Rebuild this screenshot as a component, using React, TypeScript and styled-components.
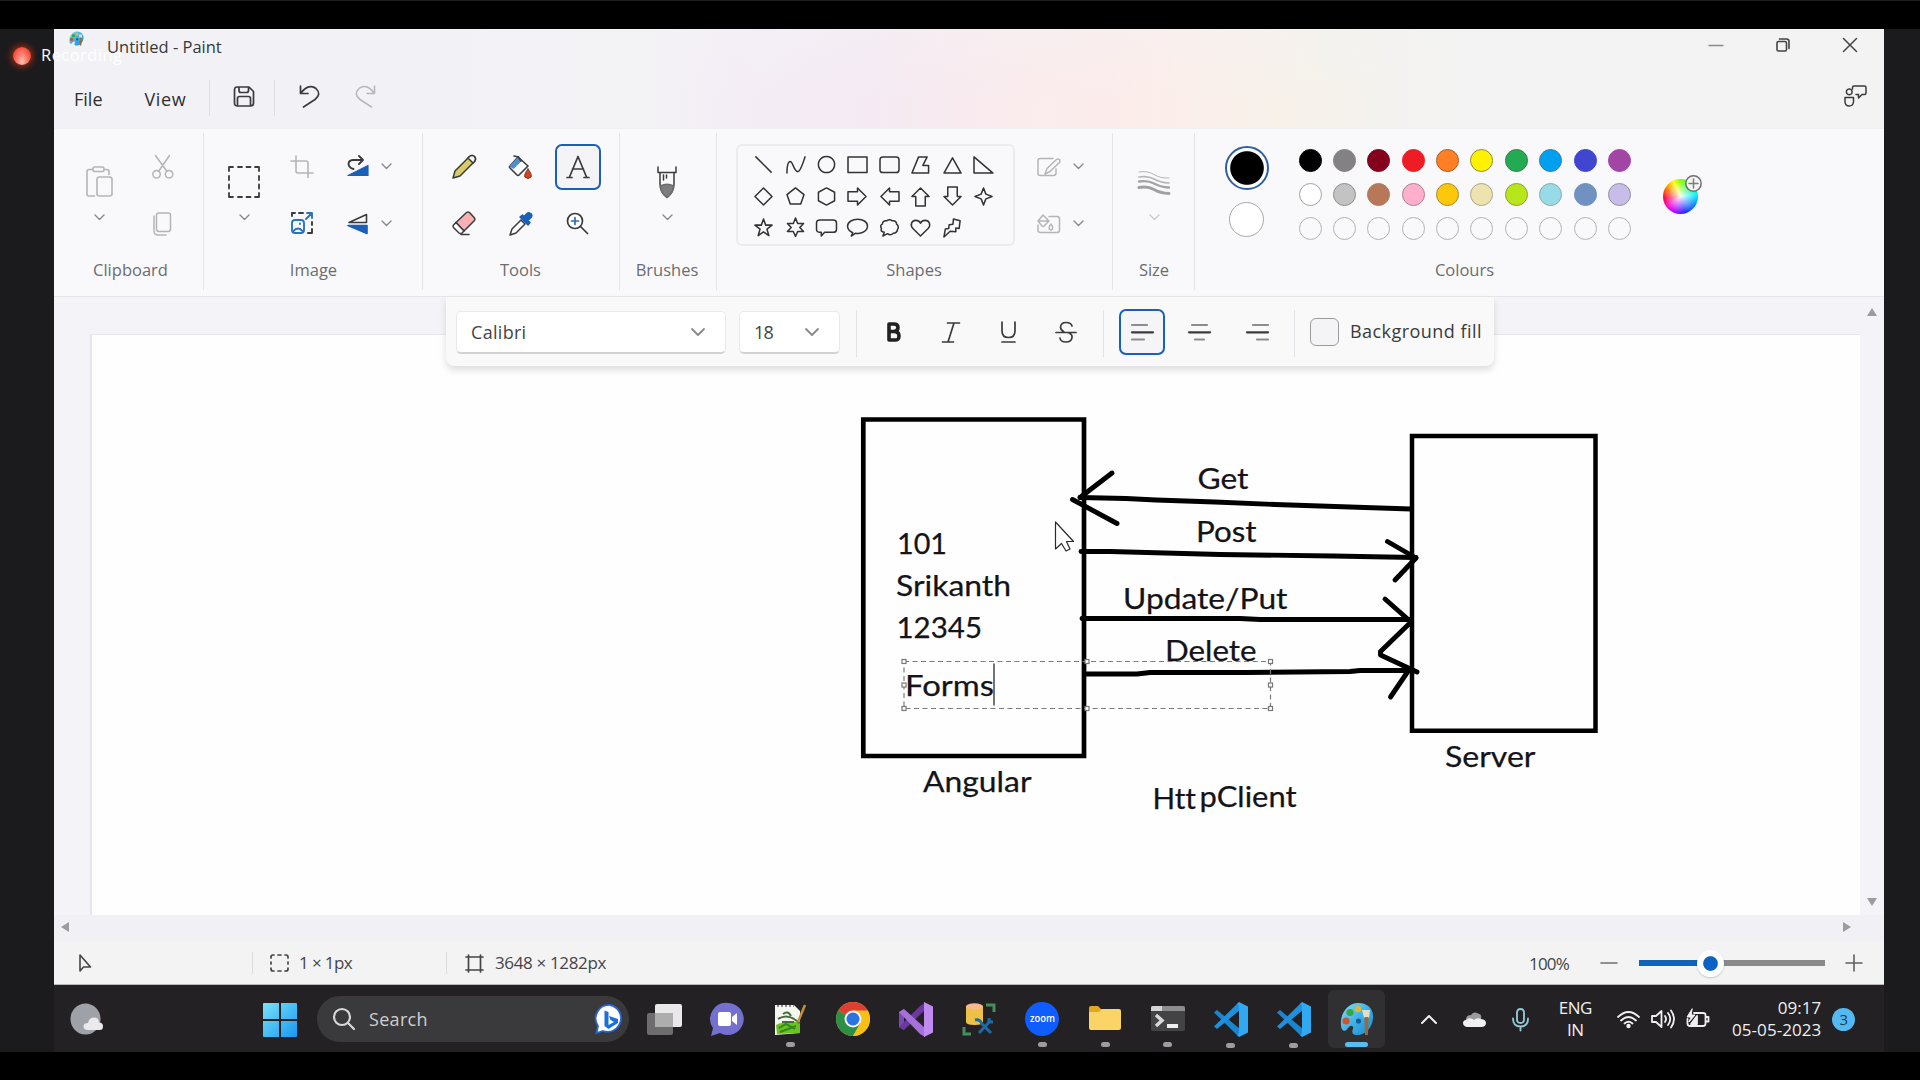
import React from "react";
import styled, { createGlobalStyle } from "styled-components";

const ink = "#3b3b3d";
const blue = "#1a5fb8";
const muted = "#b5b5b8";
const uiFont = '"Open Sans", "Noto Sans", sans-serif';

const GlobalStyle = createGlobalStyle`
  * { box-sizing: border-box; }
  body { margin: 0; background: #000; font-family: ${uiFont}; }
  svg { display: block; flex: none; overflow: visible; }
`;

/* ---------- shell ---------- */

const Screen = styled.div`
  position: relative;
  width: 1920px;
  height: 1080px;
  overflow: hidden;
  background: #000;
  border-top: 1px solid #1d1d1d;
  padding: 28px 0;
`;
const Stage = styled.main`
  height: 1023px;
  padding: 0 36px 0 54px;
  background: #1b1b1d;
`;
const Win = styled.section`
  display: flex;
  flex-direction: column;
  height: 956px;
  background: #f3f3f5;
`;
const Chrome = styled.header`
  height: 99px;
  background:
    linear-gradient(180deg, rgba(243, 243, 245, 0.3), rgba(243, 243, 245, 0) 70%),
    linear-gradient(90deg, #f2f1f5 0, #f3f2f5 600px, #f3edf6 680px, #f5eaf3 820px, #faebed 960px, #fbeceb 1060px, #fbefea 1140px, #f6f2eb 1260px, #f3f3f3 1400px, #f3f3f3 100%);
`;
const TitleBar = styled.div`
  display: flex;
  height: 40px;
  padding-right: 1px;
`;
const AppMark = styled.div`
  width: 53px;
  padding: 2px 0 0 15px;
`;
const Title = styled.h1`
  flex: 1;
  margin: 0;
  font-size: 16.5px;
  font-weight: 400;
  line-height: 35px;
  color: #38383a;
`;
const Caption = styled.div`
  display: flex;
  width: 67px;
  height: 32px;
  align-items: center;
  justify-content: center;
  color: #444;
`;
const MenuBar = styled.nav`
  display: flex;
  align-items: center;
  height: 59px;
  color: #353537;
`;
const MenuItem = styled.button<{ $left: number; $ls?: number }>`
  margin: 0 0 0 ${(p) => p.$left}px;
  padding: 0;
  border: 0;
  background: none;
  font: 18px/28px ${uiFont};
  letter-spacing: ${(p) => p.$ls ?? 0}px;
  color: #2f2f31;
`;
const MenuRule = styled.span<{ $left: number }>`
  width: 1px;
  height: 36px;
  margin: 0 0 2px ${(p) => p.$left}px;
  background: #dfdfe3;
`;
const MenuIcon = styled.span<{ $left: number; $faint?: boolean }>`
  margin: 0 0 5px ${(p) => p.$left}px;
  color: ${(p) => (p.$faint ? "#b9b9bc" : ink)};
`;

/* ---------- ribbon ---------- */

const Ribbon = styled.div`
  display: flex;
  height: 169px;
  background: #f9f9fb;
  border-top: 1px solid #f0f0f3;
  border-bottom: 1px solid #e6e6ea;
`;
const GroupBox = styled.section<{ $w: number; $rule?: boolean; $inset?: string }>`
  display: flex;
  flex-direction: column;
  width: ${(p) => p.$w}px;
  padding: ${(p) => p.$inset ?? "9px 0 0"};
  background: ${(p) => (p.$rule === false ? "none" : "linear-gradient(#e4e4e8, #e4e4e8) right 4px / 1px 157px no-repeat")};
  background-position: right 4px;
`;
const GroupBody = styled.div<{ $cols?: string; $left?: number }>`
  display: grid;
  grid-template-columns: ${(p) => p.$cols ?? "1fr"};
  grid-template-rows: 57px 57px;
  place-items: center;
  justify-content: start;
  height: 114px;
  padding-left: ${(p) => p.$left ?? 0}px;
`;
const GroupLabel = styled.h2`
  margin: 0;
  font-size: 16.5px;
  font-weight: 400;
  line-height: 35px;
  text-align: center;
  color: #6c6c6f;
`;
const BigTool = styled.div<{ $faint?: boolean }>`
  grid-row: span 2;
  align-self: start;
  display: flex;
  flex-direction: column;
  align-items: center;
  gap: 17px;
  padding-top: 28px;
  color: ${(p) => (p.$faint ? muted : ink)};
`;
const Small = styled.div<{ $faint?: boolean }>`
  display: flex;
  align-items: center;
  justify-content: center;
  color: ${(p) => (p.$faint ? muted : ink)};
`;
const SplitTool = styled.div<{ $faint?: boolean }>`
  display: flex;
  align-items: center;
  gap: 13px;
  color: ${(p) => (p.$faint ? muted : ink)};
`;
const Chosen = styled.div`
  display: flex;
  align-items: center;
  justify-content: center;
  width: 46px;
  height: 46px;
  border: 2px solid ${blue};
  border-radius: 7px;
  background: #f4f4f6;
  color: ${ink};
`;
const ShapesRow = styled.div`
  display: flex;
  height: 114px;
  padding-left: 19px;
`;
const ShapeGrid = styled.div`
  display: grid;
  grid-template-columns: repeat(8, 31.4px);
  grid-template-rows: repeat(3, 31.4px);
  place-items: center;
  width: 279px;
  height: 102px;
  margin-top: 6px;
  padding: 3px 0 0 10px;
  align-content: start;
  border: 2px solid #ececf0;
  border-radius: 6px;
  color: #333335;
`;
const ShapeOptions = styled.div`
  display: grid;
  grid-template-rows: 57px 57px;
  align-items: center;
  margin-left: 22px;
`;
const ColourBody = styled.div`
  display: flex;
  height: 114px;
`;
const Picked = styled.div`
  display: flex;
  flex-direction: column;
  align-items: center;
  width: 45px;
  margin: 8px 0 0 29px;
  gap: 12px;
`;
const Primary = styled.span`
  width: 44px;
  height: 44px;
  border: 2px solid #2f5ea3;
  border-radius: 50%;
  background: radial-gradient(circle, #000 16.3px, #fdfdfe 17.3px);
`;
const Secondary = styled.span`
  width: 35px;
  height: 35px;
  border: 1.5px solid #a9a9ab;
  border-radius: 50%;
  background: #fff;
`;
const Palette = styled.div`
  display: grid;
  grid-template-columns: repeat(10, 34.36px);
  grid-template-rows: repeat(3, 34.3px);
  place-items: center;
  margin: 5px 0 0 24px;
`;
const Swatch = styled.span<{ $c?: string; $ring?: string }>`
  width: 23px;
  height: 23px;
  border-radius: 50%;
  background: ${(p) => p.$c ?? "transparent"};
  border: 1.5px solid ${(p) => p.$ring ?? p.$c ?? "#b3b3b6"};
`;
const Wheel = styled.div`
  position: relative;
  width: 35px;
  height: 35px;
  margin: 41px 0 0 26px;
  border-radius: 50%;
  background:
    radial-gradient(circle, rgba(255, 255, 255, 0.95), rgba(255, 255, 255, 0) 68%),
    conic-gradient(#8f0, #0f6 45deg, #0ef 85deg, #08f 120deg, #22f 165deg, #b0f 205deg, #f0c 235deg, #f04 265deg, #f60 295deg, #ff0 335deg, #8f0);
`;
const WheelAdd = styled.span`
  position: absolute;
  top: -4px;
  left: 22px;
`;

/* ---------- text tool bar ---------- */

const Workspace = styled.div`
  position: relative;
  display: grid;
  grid-template-columns: 1806px 24px;
  grid-template-rows: 618px 26px;
  height: 644px;
  background: #f4f3f7;
`;
const TextBar = styled.div`
  position: absolute;
  top: 0;
  left: 392px;
  display: flex;
  align-items: flex-start;
  width: 1048px;
  height: 69px;
  padding: 14px 0 0 10px;
  border-radius: 0 0 8px 8px;
  background: #f9f9fa;
  box-shadow: 0 4px 7px rgba(0, 0, 0, 0.13);
`;
const Select = styled.div<{ $w: number; $gap?: number; $ls?: number }>`
  display: flex;
  align-items: center;
  justify-content: space-between;
  width: ${(p) => p.$w}px;
  height: 43px;
  margin-right: ${(p) => p.$gap ?? 0}px;
  padding: 0 21px 0 14px;
  border: 1px solid #e9e9ec;
  border-bottom: 2px solid #d2d2d5;
  border-radius: 5px;
  background: #fff;
  font-size: 18px;
  letter-spacing: ${(p) => p.$ls ?? 0}px;
  color: #444446;
`;
const BarRule = styled.span<{ $l: number; $r: number }>`
  width: 1px;
  height: 47px;
  margin: -1px ${(p) => p.$r}px 0 ${(p) => p.$l}px;
  background: #e3e3e7;
`;
const BarButton = styled.div<{ $w: number; $on?: boolean }>`
  display: flex;
  align-items: center;
  justify-content: center;
  width: ${(p) => p.$w}px;
  height: 46px;
  margin-top: -2px;
  border: 2px solid ${(p) => (p.$on ? blue : "transparent")};
  border-radius: 7px;
  background: ${(p) => (p.$on ? "#f5f5f8" : "none")};
  color: ${ink};
`;
const Box = styled.span`
  width: 29px;
  height: 28px;
  margin: 7px 11px 0 0;
  border: 1.5px solid #9b9b9e;
  border-radius: 6px;
  background: #f4f4f6;
`;
const FillLabel = styled.span`
  font-size: 18px;
  line-height: 41px;
  letter-spacing: 0.45px;
  color: #3a3a3c;
`;

/* ---------- canvas ---------- */

const CanvasArea = styled.div`
  padding: 37px 0 0 36px;
`;
const Paper = styled.div`
  height: 581px;
  border-top: 1px solid #e7e6ea;
  border-left: 2px solid #e7e6ea;
  background: #fefefe;
`;
const VScroll = styled.div`
  display: flex;
  flex-direction: column;
  justify-content: space-between;
  align-items: center;
  padding: 10px 0 8px;
`;
const HScroll = styled.div`
  display: flex;
  justify-content: space-between;
  align-items: center;
  padding: 0 9px 2px 7px;
  background: #f1f0f4;
`;
const Corner = styled.div`
  background: #f1f0f4;
`;

/* ---------- status ---------- */

const Status = styled.footer`
  display: flex;
  align-items: center;
  height: 44px;
  padding-top: 1px;
  border-bottom: 1px solid #b7b7b9;
  background: #f3f3f4;
  font-size: 17px;
  color: #454547;
`;
const StatusCell = styled.div<{ $w: number; $left: number; $gap?: number; $ls?: number }>`
  display: flex;
  align-items: center;
  gap: ${(p) => p.$gap ?? 0}px;
  width: ${(p) => p.$w}px;
  height: 22px;
  padding-left: ${(p) => p.$left}px;
  border-right: 1px solid #dcdce0;
  line-height: 22px;
  letter-spacing: ${(p) => p.$ls ?? 0}px;
  white-space: pre;
  &:nth-child(3) { border-right: 0; }
`;
const Zoom = styled.div`
  display: flex;
  flex: 1;
  align-items: center;
  justify-content: flex-end;
  padding-right: 22px;
`;
const Percent = styled.span`
  margin-right: 32px;
  letter-spacing: -0.8px;
`;
const Track = styled.div`
  display: flex;
  align-items: center;
  width: 186px;
  height: 26px;
  margin: 0 21px 0 22px;
  background: linear-gradient(90deg, #1262b8 70px, #8a8a8a 70px) center / 100% 6px no-repeat;
  border-radius: 3px;
`;
const Thumb = styled.span`
  width: 27px;
  height: 27px;
  margin-left: 58px;
  border-radius: 50%;
  background: radial-gradient(circle, #0a63c4 6.8px, #fff 7.8px);
  box-shadow: 0 1px 2px rgba(0, 0, 0, 0.2);
`;

/* ---------- task bar ---------- */

const TaskBar = styled.div`
  display: flex;
  height: 67px;
  background: #232123;
  color: #efeff0;
`;
const Weather = styled.div`
  width: 209px;
  padding: 18px 0 0 16px;
`;
const Start = styled.div`
  width: 54px;
  padding-top: 18px;
`;
const SearchBox = styled.div`
  display: flex;
  align-items: center;
  width: 312px;
  height: 46px;
  margin-top: 11px;
  padding: 0 4px 0 16px;
  border-radius: 23px;
  background: #3a3a3c;
`;
const SearchText = styled.span`
  flex: 1;
  margin-left: 14px;
  font-size: 18px;
  letter-spacing: 0.3px;
  color: #cfcfd1;
`;
const Pins = styled.div`
  display: grid;
  grid-template-columns: repeat(12, 62.95px);
  margin-left: 4px;
`;
const Pin = styled.div<{ $active?: boolean; $run?: boolean }>`
  display: flex;
  flex-direction: column;
  align-items: center;
  justify-self: center;
  width: 57px;
  height: 58px;
  margin-top: 5px;
  padding-top: 12px;
  border-radius: 6px;
  background: ${(p) => (p.$active ? "#303032" : "none")};
  &::after {
    content: "";
    width: ${(p) => (p.$active ? 23 : 9)}px;
    height: 5px;
    margin-top: 6px;
    border-radius: 3px;
    background: ${(p) => (p.$active ? "#58bdf0" : p.$run ? "#9d9d9f" : "transparent")};
  }
`;
const Tray = styled.div`
  display: flex;
  flex: 1;
  align-items: center;
  height: 68px;
  padding-left: 33px;
`;
const TrayIcon = styled.span<{ $left: number }>`
  margin-left: ${(p) => p.$left}px;
`;
const TrayText = styled.div<{ $w: number; $left: number; $align: string; $ls: number }>`
  width: ${(p) => p.$w}px;
  margin-left: ${(p) => p.$left}px;
  font-size: 17px;
  line-height: 22.4px;
  letter-spacing: ${(p) => p.$ls}px;
  text-align: ${(p) => p.$align};
  white-space: nowrap;
`;
const Count = styled.span`
  width: 23px;
  height: 23px;
  margin-left: 11px;
  border-radius: 50%;
  background: #52b9f3;
  color: #173a54;
  font-size: 15px;
  line-height: 22px;
  text-align: center;
`;

/* ---------- recording overlay ---------- */

const Recording = styled.div`
  position: absolute;
  top: 39px;
  left: 13px;
  display: flex;
  align-items: center;
  gap: 10px;
  height: 32px;
  font-size: 16.5px;
  line-height: 30px;
  letter-spacing: 0.45px;
  color: #fff;
`;
const RecordingText = styled.span`
  margin-top: -2px;
`;
const Dot = styled.span`
  width: 18px;
  height: 18px;
  border-radius: 50%;
  background: radial-gradient(ellipse at 50% 80%, #ffc4ba 0, #ff8a7a 30%, #f4483a 75%);
  box-shadow: 0 0 6px 2px rgba(190, 50, 15, 0.75);
`;

/* ---------- drawing helpers ---------- */

type IcProps = { w: number; h: number; sw?: number; vb?: string; children: React.ReactNode };
const Ic = ({ w, h, sw = 1.6, vb, children }: IcProps) => (
  <svg width={w} height={h} viewBox={vb ?? `0 0 ${w} ${h}`} fill="none" stroke="currentColor" strokeWidth={sw} strokeLinecap="round" strokeLinejoin="round">
    {children}
  </svg>
);
const Chevron = ({ w = 9, c = "#88888b" }: { w?: number; c?: string }) => (
  <svg width={w} height={w / 2} viewBox="0 0 10 5" fill="none" stroke={c} strokeWidth={1.5} strokeLinecap="round" strokeLinejoin="round">
    <path d="M0 0l5 5 5-5" />
  </svg>
);
const Group = ({ w, label, rule, inset, children }: { w: number; label: string; rule?: boolean; inset?: string; children: React.ReactNode }) => (
  <GroupBox $w={w} $rule={rule} $inset={inset}>
    {children}
    <GroupLabel>{label}</GroupLabel>
  </GroupBox>
);

const shapes = [
  "M2 2L18 18",
  "M1 19C1 5 5 5 7 10S12 21 15 15S18 8 20 2",
  "M10 1.5a8.5 8.5 0 1 0 .01 0z",
  "M0 2H20V18.500H0z",
  "M3 2H17Q20 2 20 5V15.500Q20 18.500 17 18.500H3Q0 18.500 0 15.500V5Q0 2 3 2z",
  "M8 2H17L12.500 11H18.500V19H1z",
  "M10 3L19 19H1z",
  "M0 2V19H20z",
  "M10 1L19 10L10 19L1 10z",
  "M10 1L19 8L15.500 18H4.500L1 8z",
  "M10 1L18.500 5.500V14.500L10 19L1.500 14.500V5.500z",
  "M0 5H10V1L19 10L10 19V15H0z",
  "M20 5H10V1L1 10L10 19V15H20z",
  "M5 20V10H1L10 1L19 10H15V20z",
  "M5 0V10H1L10 19L19 10H15V0z",
  "M10 1L12.500 7.500L19 10L12.500 12.500L10 19L7.500 12.500L1 10L7.500 7.500z",
  "M10 1L12.300 7.500H19L13.600 11.600L15.600 18.500L10 14.500L4.400 18.500L6.400 11.600L1 7.500H7.700z",
  "M10 0L12.300 5.800H18.500L14.500 10L18.500 14.200H12.300L10 19.500L7.700 14.200H1.500L5.500 10L1.500 5.800H7.700z",
  "M3 2H17Q20.500 2 20.500 5V12Q20.500 15 17 15H8L4.500 19V15H3Q-.5 15 -.5 12V5Q-.5 2 3 2z",
  "M5 15.500Q-.5 13 -.5 8.500C0 -1 20.500 -1 20.500 8.500C20.500 14 14 17 8 16L3.500 19z",
  "M4.500 15Q0 14.500 1.500 11Q-.5 8 2.500 6.500Q3 2.500 7 3Q10 .5 13 3Q17 2.500 17.500 6.500Q20.500 9 18.500 12Q18 16 14 16Q11 19 8 16.500L3 19z",
  "M10 19L2 11C-1.500 7 1 2.500 5 2.500Q8.500 2.500 10 5.500Q11.500 2.500 15 2.500C19 2.500 21.500 7 18 11z",
  "M11 1L18 3L17 11L13.500 10.500L13.500 14.500L7.500 14L1 20L2.500 11.500L6 11L6.500 7L10.500 6.500z",
];

const row1 = [["#000"], ["#838184"], ["#85001c"], ["#ee1c24"], ["#ff8024", "#a75e2b"], ["#fff200", "#8d8a3c"], ["#22ab52", "#3e7851"], ["#009ff0", "#3a7da5"], ["#4045d2"], ["#a246a6"]];
const row2 = [["#fff", "#a2a2a4"], ["#c3c3c4", "#8e8e90"], ["#b87857"], ["#ffaecb", "#a98390"], ["#ffc70b", "#a28a3c"], ["#eee3ae", "#a9a58f"], ["#b7e61b", "#89a13a"], ["#98dae6", "#8aa9af"], ["#7191c0"], ["#c8bde8", "#95909f"]];

const PaintMark = ({ s }: { s: number }) => (
  <svg width={s} height={s} viewBox="0 0 34 34">
    <defs>
      <linearGradient id="pal" x1="0" y1="0" x2="1" y2="1">
        <stop offset="0" stopColor="#8adcf0" />
        <stop offset=".5" stopColor="#3fb2e6" />
        <stop offset="1" stopColor="#1c86d2" />
      </linearGradient>
    </defs>
    <path d="M17 1C27 0 34 7 33 16C32.500 24 27 32 19 33C13 33.500 11 31 13 27C14 24 11 22 8 26C5 31 1 29 1 23C0 12 7 2 17 1z" fill="url(#pal)" />
    <circle cx="6" cy="19" r="3.600" fill="#d1532c" />
    <circle cx="10" cy="10.500" r="3.600" fill="#35a83f" />
    <circle cx="18" cy="7" r="3.300" fill="#d8b93a" />
    <circle cx="18.500" cy="19" r="2.600" fill="#0e5d9a" />
    <path d="M22 8h8l-1 8h-5z" fill="#e6dcc8" />
    <path d="M24.500 15h4l-.5 18h-3z" fill="#a0672f" />
  </svg>
);

const VsCode = () => (
  <svg width="36" height="35" viewBox="0 0 36 35">
    <path d="M1 10.500L4 8L27 27V34.500L25 34z" fill="#1a86d0" />
    <path d="M1 24.500L4 27L27 8V.5L25 1z" fill="#2190dc" />
    <path d="M26 0L35 4.500V30.500L26 35L24 33Q26 33 26 30V5Q26 2 24 2z" fill="#30a9f2" />
  </svg>
);

/* text drawn on the canvas: x, baseline, width, value */
const notes: [number, number, number, string][] = [
  [897, 554, 50, "101"],
  [896, 596, 115, "Srikanth"],
  [896.500, 638, 85.500, "12345"],
  [905, 695.500, 89, "Forms"],
  [1197.500, 489, 51, "Get"],
  [1196, 542, 60.500, "Post"],
  [1123, 609, 164.500, "Update/Put"],
  [1165, 661, 91.500, "Delete"],
  [923, 792, 108.500, "Angular"],
  [1152.500, 809, 43.500, "Htt"],
  [1199.500, 807, 97, "pClient"],
  [1445, 766.500, 90.500, "Server"],
];
const strokes = [
  "M1080 497.500L1126 498.500L1156 500L1215 502L1275 504.500L1335 506.500L1365 507.500L1411 509",
  "M1112 473L1080 497.500", "M1072.500 499.500L1117 523.500",
  "M1081 551.500L1110 551.500L1165 553L1220 554.500L1333 556L1387 557L1416 557.500",
  "M1387.500 541.500L1416 558L1395 580",
  "M1082 618.500H1240L1260 619.500H1410",
  "M1385 599L1411 622L1380.500 651.500V655L1417 672",
  "M1085 674L1137 674L1150 672.500H1245L1350 671.500L1360 670.500H1411",
  "M1390.500 697L1408.500 670.500",
];
const handles: [number, number][] = [[904, 661.500], [1087, 661.500], [1270.500, 661.500], [904, 685], [1270.500, 685], [904, 708.500], [1087, 708.500], [1270.500, 708.500]];

const NoteText = styled.text`
  font: 28.8px Lato, Carlito, sans-serif;
  font-variant-ligatures: none;
  fill: #141418;
  stroke: #141418;
  stroke-width: 0.25px;
`;

const Drawing = () => (
  <svg width="1767" height="580" viewBox="92 335 1767 580">
    <g fill="none" stroke="#000" strokeWidth="4.900" strokeLinecap="round" strokeLinejoin="round">
      <path d="M863.300 419.500H1084V756H863.300z" strokeWidth="4.700" strokeLinejoin="miter" />
      <path d="M1412 436H1595.500V730.800H1412z" strokeWidth="4.500" strokeLinejoin="miter" />
      {strokes.map((d) => <path key={d} d={d} />)}
    </g>
    {notes.map(([x, y, w, t]) => (
      <NoteText key={t} x={x} y={y} textLength={w} lengthAdjust="spacingAndGlyphs">{t}</NoteText>
    ))}
    <path d="M904 661.500H1270.500V708.500H904z" fill="none" stroke="#7b7b7e" strokeWidth="1.200" strokeDasharray="5 3.500" />
    {handles.map(([x, y]) => <rect key={`${x}-${y}`} x={x - 2} y={y - 2} width="4" height="4" fill="#fff" stroke="#77777a" strokeWidth="1.200" />)}
    <path d="M994 663.500V705.500" stroke="#2a2a2c" strokeWidth="1.300" />
    <path d="M1055.500 522V549L1061.500 543.500L1066 551L1070 549L1066.500 541.500H1073.500z" fill="#fff" stroke="#2a2a2e" strokeWidth="1.200" strokeLinejoin="round" />
  </svg>
);

export default function App() {
  return (
    <Screen>
      <GlobalStyle />
      <Stage>
        <Win>
          <Chrome>
            <TitleBar>
              <AppMark><PaintMark s={15} /></AppMark>
              <Title>Untitled - Paint</Title>
              <Caption><Ic w={14} h={14} sw={1.3}><path d="M0 7.500H14" stroke="#8b8b8d" /></Ic></Caption>
              <Caption><Ic w={14} h={14} sw={1.600}><path d="M1 5Q1 3.500 2.500 3.500H9Q10.500 3.500 10.500 5V11.500Q10.500 13 9 13H2.500Q1 13 1 11.500zM3.500 1H10.500Q13 1 13 3.500V10.500" /></Ic></Caption>
              <Caption><Ic w={14} h={14} sw={1.500}><path d="M.5 .5L13.500 13.500M13.500 .5L.5 13.500" /></Ic></Caption>
            </TitleBar>
            <MenuBar>
              <MenuItem $left={20}>File</MenuItem>
              <MenuItem $left={42} $ls={0.6}>View</MenuItem>
              <MenuRule $left={23} />
              <MenuIcon $left={23.5}>
                <Ic w={20} h={21} sw={1.7}><path d="M3 1H15L19.500 5.500V17Q19.500 20 16.500 20H3.500Q.5 20 .5 17V4Q.5 1 3 1zM5 1V4.500Q5 6.500 7 6.500H12.500Q14.500 6.500 14.500 4.500V1M3.500 20V12.500Q3.500 10.500 5.500 10.500H14.500Q16.500 10.500 16.500 12.500V20" /></Ic>
              </MenuIcon>
              <MenuRule $left={20.5} />
              <MenuIcon $left={25}>
                <Ic w={20} h={23} sw={1.7}><path d="M.5 1V8.500H8M1 8C6 1 12 0 16 3.500C20 7.500 19.500 11 15 14.500L3.500 22" /></Ic>
              </MenuIcon>
              <MenuIcon $left={35} $faint>
                <Ic w={20} h={23} sw={1.600}><path d="M19.500 1V8.500H12M19 8C14 1 8 0 4 3.500C0 7.500 .5 11 5 14.500L16.500 22" /></Ic>
              </MenuIcon>
              <MenuIcon $left={1469}>
                <Ic w={24} h={24} sw={1.500}><path d="M1 13.500H9.500V18Q9 22 5.200 22T1 18zM5.200 5A2.900 2.900 0 1 0 5.300 5M8.500 5V3.500Q8.500 2 10 2H20.500Q22 2 22 3.500V9Q22 10.500 20.500 10.500H18L14.500 14V10.500H12" /></Ic>
              </MenuIcon>
            </MenuBar>
          </Chrome>

          <Ribbon>
            <Group w={150} label="Clipboard" inset="9px 0 0 3px">
              <GroupBody $cols="62px 65px" $left={11}>
                <BigTool $faint>
                  <Ic w={27} h={32}><path d="M6.500 3.500H3Q1 3.500 1 5.500V28Q1 30 3 30H8.500M19.500 3.500H21Q23 3.500 23 5.500V8.500M7 2.500Q7 1 8.500 1H16.500Q18 1 18 2.500V4Q18 5.500 16.500 5.500H8.500Q7 5.500 7 4zM13.500 11H23.500Q26 11 26 13.500V28Q26 30 23.500 30H13.500Q11 30 11 28V13.500Q11 11 13.500 11z" /></Ic>
                  <Chevron c="#8a8a8d" />
                </BigTool>
                <Small $faint>
                  <Ic w={22} h={24} sw={1.500}><path d="M3.500 .5L15 16.500M17.500 .5L6.500 16.500M4.500 15.500A3.800 3.800 0 1 0 4.600 15.500M17 15.500A3.800 3.800 0 1 0 17.100 15.500" /></Ic>
                </Small>
                <Small $faint>
                  <Ic w={20} h={24} sw={1.500}><path d="M6 1H15Q17.500 1 17.500 3V17Q17.500 19.500 15 19.500H6Q3.500 19.500 3.500 17V3Q3.500 1 6 1zM1 4V19Q1 23 5 23H13" /></Ic>
                </Small>
              </GroupBody>
            </Group>

            <Group w={219} label="Image">
              <GroupBody $cols="64px 51px 83px" $left={8}>
                <BigTool>
                  <Ic w={32} h={32} sw={1.8}><path d="M1 5V1H5M10 1H14M18.500 1H22.500M27 1H31V5M31 10V14M31 18.500V22.500M31 27V31H27M22.500 31H18.500M14 31H10M5 31H1V27M1 22.500V18.500M1 14V10" /></Ic>
                  <Chevron />
                </BigTool>
                <Small $faint><Ic w={22} h={22} sw={1.600}><path d="M5 0V15Q5 17 7 17H22M0 5H15Q17 5 17 7V21.500" /></Ic></Small>
                <SplitTool>
                  <Ic w={22} h={24} sw={1.900}><path d="M6.500 14C0 12 0 5.500 6 5H15M12 1L16 5L12 9" /><path d="M1 20.500L21 10.500V20.500z" fill={blue} stroke={blue} strokeWidth="1.200" /></Ic>
                  <Chevron />
                </SplitTool>
                <Small>
                  <Ic w={22} h={23} sw={1.900}><path d="M1 4V1H4M8 1H12M21 10V13M21 17V21H17" /><path d="M4 8H10Q13 8 13 11V18Q13 21 10 21H4Q1 21 1 18V11Q1 8 4 8zM2 19.500Q7 13.500 12 19.500M15 7L21 1M16 1H21V6M9 11.500V12" stroke="#2a74bf" /></Ic>
                </Small>
                <SplitTool>
                  <Ic w={22} h={22} sw={1.600}><path d="M2 9.500L19.500 1.500V9.500z" /><path d="M1 12.500H20V20.500z" fill={blue} stroke={blue} /></Ic>
                  <Chevron />
                </SplitTool>
              </GroupBody>
            </Group>

            <Group w={197} label="Tools" inset="9px 2px 0 0">
              <GroupBody $cols="57.2px 57.2px 57.2px" $left={12}>
                <Small>
                  <Ic w={24} h={24} sw={1.500}><path d="M1 23L3 16L17.500 1.500Q20 -.5 22.500 1.500Q24.500 4 22.500 6.500L8 21z" fill="#d9cc62" /><path d="M16 3L21 8L22.500 6.500Q24.500 4 22.500 1.500Q20 -.5 17.500 1.500z" fill="#f6f6f6" /></Ic>
                </Small>
                <Small>
                  <Ic w={24} h={24} sw={1.600}><path d="M9 2L19 11L10 20Q9 21 8 20L1 13Q0 12 1 11z" fill="#fff" /><path d="M1.500 11L9 3L12 5.500L4.500 13z" fill="#4f8fd0" stroke="#4f8fd0" /><path d="M5 1L9.500 2L12 6" /><path d="M19 14Q14.500 20 16 22Q19 25 22 22Q23.500 20 19 14z" fill="#d8431c" stroke="#7b3425" strokeWidth="1" /></Ic>
                </Small>
                <Chosen><Ic w={24} h={24} sw={1.700}><path d="M3.500 22L12 1.500L20.500 22M6.500 14H17.500M1 22.500H6M18 22.500H23" /></Ic></Chosen>
                <Small>
                  <Ic w={24} h={25} sw={1.500}><path d="M14.500 1.500Q16 .5 17.500 1.500L22.500 7Q23.500 8 22.500 9.500L12 20L4 11.500z" fill="#f9b0b3" /><path d="M4 11.500L12 20L10 22Q8.500 23 7 22L1.500 16.500Q.5 15 1.500 14zM9 23.500H17" fill="#fff" /></Ic>
                </Small>
                <Small>
                  <Ic w={24} h={24} sw={1.500}><path d="M1 23L3 17L12 8L16 12L7 21z" fill="#fff" /><path d="M11 5L19 13L21 10.500L19 8.500L22 5.500Q24 3 21.500 1.500Q19.500 0 17.500 2L15 4.500L13.500 3z" fill={blue} stroke={blue} /></Ic>
                </Small>
                <Small>
                  <Ic w={21} h={21} sw={1.700}><circle cx="8" cy="8" r="7.500" fill="#fff" /><path d="M13.500 13.500L20.500 20.500" /><path d="M4.500 8H11.500M8 4.500V11.500" stroke="#2470bd" /></Ic>
                </Small>
              </GroupBody>
            </Group>

            <Group w={97} label="Brushes" inset="9px 3px 0 0">
              <GroupBody>
                <BigTool>
                  <Ic w={20} h={32} sw={1.500}><path d="M1 1V6.500H19V1M3 7V18Q3 26 10 31.500Q17 26 17 18V7M6.500 9V14M9.500 9V12" /><path d="M3.500 20Q10 16.500 16.500 20Q16 27 10 31.500Q4 27 3.500 20z" fill="#7d7d80" stroke="#6c6c6e" /></Ic>
                  <Chevron />
                </BigTool>
              </GroupBody>
            </Group>

            <Group w={396} label="Shapes" inset="9px 2px 0 0">
              <ShapesRow>
                <ShapeGrid>
                  {shapes.map((d) => <Ic key={d} w={19} h={19} sw={1.6} vb="0 0 20 20"><path d={d} /></Ic>)}
                </ShapeGrid>
                <ShapeOptions>
                  <SplitTool $faint>
                    <Ic w={24} h={20} sw={1.500}><path d="M19 12V16Q19 18.500 16.500 18.500H3.500Q1 18.500 1 16.500V4Q1 1.500 3.500 1.500H16M8 17L10 11.500L19.500 2.500Q21 1.500 22.500 2.500Q23.500 4 22.500 5.500L13 14.500z" /></Ic>
                    <Chevron />
                  </SplitTool>
                  <SplitTool $faint>
                    <Ic w={24} h={20} sw={1.500}><path d="M12 2.500H20Q22.500 2.500 22.500 5V16Q22.500 18.500 20 18.500H4Q1 18.500 1 16.500V11M1 7L6 1L12 7L7 12Q6 13 5 12zM1.500 7H12M14 10Q10 15 14 16Q17.500 15 14 10z" /></Ic>
                    <Chevron />
                  </SplitTool>
                </ShapeOptions>
              </ShapesRow>
            </Group>

            <Group w={82} label="Size">
              <GroupBody>
                <BigTool $faint>
                  <Ic w={32} h={32} sw={1}><path d="M1 6Q10 4.500 16 8.500T31 12" /><path d="M1 11Q10 9.500 16 13T31 17" strokeWidth="1.700" /><path d="M1 15.500Q10 14 16 17.500T31 21.500" strokeWidth="2.300" stroke="#a3a3a6" /><path d="M1 21.500Q10 20 16 23.500T31 27.500" strokeWidth="3" stroke="#a0a0a3" /></Ic>
                  <Chevron c="#c9c9cc" />
                </BigTool>
              </GroupBody>
            </Group>

            <Group w={539} label="Colours" rule={false}>
              <ColourBody>
                <Picked><Primary /><Secondary /></Picked>
                <Palette>
                  {row1.concat(row2).map(([c, ring]) => <Swatch key={c} $c={c} $ring={ring} />)}
                  {row1.map(([c]) => <Swatch key={`free${c}`} />)}
                </Palette>
                <Wheel>
                  <WheelAdd><Ic w={17} h={17} sw={1.500}><circle cx="8.500" cy="8.500" r="7.700" fill="#f4f4f4" stroke="#6f6f70" /><path d="M8.500 4V13M4 8.500H13" stroke="#7c7c7e" /></Ic></WheelAdd>
                </Wheel>
              </ColourBody>
            </Group>
          </Ribbon>

          <Workspace>
            <CanvasArea><Paper><Drawing /></Paper></CanvasArea>
            <VScroll>
              <svg width="12" height="10"><path d="M6 1L11 9H1z" fill="#9c9c9f" /></svg>
              <svg width="12" height="10"><path d="M6 9L11 1H1z" fill="#9c9c9f" /></svg>
            </VScroll>
            <HScroll>
              <svg width="9" height="12"><path d="M0 6L8 1V11z" fill="#9c9c9f" /></svg>
              <svg width="9" height="12"><path d="M9 6L1 1V11z" fill="#9c9c9f" /></svg>
            </HScroll>
            <Corner />
            <TextBar>
              <Select $w={270} $gap={13} $ls={0.3}>Calibri<Chevron w={12} /></Select>
              <Select $w={101} $ls={-0.8}>18<Chevron w={12} /></Select>
              <BarRule $l={16} $r={8} />
              <BarButton $w={57}><Ic w={15} h={20} sw={4}><path d="M3 2V18M3 2H8Q12 2 12 5.500T8 9.500H3M8 9.500Q13 9.500 13 14T8.500 18H3" stroke="#222224" strokeWidth="3.600" /></Ic></BarButton>
              <BarButton $w={58}><Ic w={20} h={21} sw={1.700}><path d="M6.500 1H18.500M1.500 20H12.500M13 1L7 20" /></Ic></BarButton>
              <BarButton $w={57}><Ic w={17} h={21} sw={1.700}><path d="M2 0V9Q2 15.500 8.500 15.500T15 9V0M2 20H15" /></Ic></BarButton>
              <BarButton $w={57}><Ic w={20} h={21} sw={1.700}><path d="M16 4Q15 .5 10 .5T4.500 5Q4.500 8 8 10M0 10.500H20M13 11Q16.500 12.500 16 15.500Q15.500 20 10 20T4 16" /></Ic></BarButton>
              <BarRule $l={9} $r={15} />
              <BarButton $w={46} $on><Ic w={23} h={18} sw={2.200}><path d="M1 2H16M1 16.500H13" stroke="#8c8c8f" /><path d="M1 9.300H22" /></Ic></BarButton>
              <BarButton $w={69}><Ic w={23} h={18} sw={2.200}><path d="M4 2H19M7 16.500H16" stroke="#8c8c8f" /><path d="M1 9.300H22" /></Ic></BarButton>
              <BarButton $w={46}><Ic w={23} h={18} sw={2.200}><path d="M7 2H22M11 16.500H22" stroke="#8c8c8f" /><path d="M1 9.300H22" /></Ic></BarButton>
              <BarRule $l={14} $r={15} />
              <Box />
              <FillLabel>Background fill</FillLabel>
            </TextBar>
          </Workspace>

          <Status>
            <StatusCell $w={199} $left={25}><Ic w={12} h={19} sw={1.600}><path d="M1 1V17L4.500 13H11.500z" /></Ic></StatusCell>
            <StatusCell $w={194} $left={17} $gap={10} $ls={-0.6}>
              <Ic w={19} h={18} sw={1.700}><path d="M1 4V3Q1 1 3 1H4M8 1H11M15 1H16Q18 1 18 3V4M18 8V10M18 14V15Q18 17 16 17H15M11 17H8M4 17H3Q1 17 1 15V14M1 10V8" /></Ic>1 × 1px
            </StatusCell>
            <StatusCell $w={260} $left={19} $gap={12} $ls={-0.35}>
              <Ic w={17} h={17} sw={1.700}><path d="M2.500 0V17M14.500 0V17M0 2H17M0 15H17" /></Ic>3648 × 1282px
            </StatusCell>
            <Zoom>
              <Percent>100%</Percent>
              <Ic w={16} h={16} sw={1.600}><path d="M0 8H16" stroke="#707072" /></Ic>
              <Track><Thumb /></Track>
              <Ic w={16} h={16} sw={1.600}><path d="M0 8H16M8 0V16" stroke="#606062" /></Ic>
            </Zoom>
          </Status>
        </Win>

        <TaskBar>
          <Weather>
            <svg width="34" height="33" viewBox="0 0 34 33">
              <ellipse cx="15.500" cy="16" rx="15" ry="15.500" fill="#9ea1a8" />
              <path d="M18 27Q13.500 27 13.500 23.500T18 20Q19 14.500 24 14.500T29 19.500Q33 19.500 33 23.500T29 27z" fill="#e9e9ee" />
            </svg>
          </Weather>
          <Start>
            <svg width="34" height="34" viewBox="0 0 34 34">
              <defs><linearGradient id="win" x1="0" y1="0" x2="1" y2="1"><stop offset="0" stopColor="#79e3fb" /><stop offset="1" stopColor="#1797f0" /></linearGradient></defs>
              <path d="M0 1Q0 0 1 0H16V16H0zM18 0H33Q34 0 34 1V16H18zM0 18H16V34H1Q0 34 0 33zM18 18H34V33Q34 34 33 34H18z" fill="url(#win)" />
            </svg>
          </Start>
          <SearchBox>
            <Ic w={22} h={22} sw={2.200}><circle cx="9" cy="9" r="8" stroke="#d8d8da" /><path d="M15 15L21 21" stroke="#d8d8da" /></Ic>
            <SearchText>Search</SearchText>
            <svg width="32" height="30" viewBox="0 0 32 30">
              <path d="M17 1A13.500 13.500 0 1 1 10 27L3.500 29L5 22A13.500 13.500 0 0 1 17 1z" fill="#fff" stroke="#2864d8" strokeWidth="1.800" />
              <path d="M11.500 6.500L15.500 8V21L21 18L17.500 16L16 12L25 15V19L15.500 25L11.500 22z" fill="#1a6fd8" />
            </svg>
          </SearchBox>
          <Pins>
            <Pin><svg width="36" height="34" viewBox="0 0 36 34"><rect x="9" y="2" width="27" height="23" rx="2" fill="#e9e9ea" /><rect x="1" y="11" width="26" height="22" rx="2" fill="#6d6d6f" /><rect x="9" y="11" width="18" height="14" fill="#adadae" /></svg></Pin>
            <Pin><svg width="34" height="34" viewBox="0 0 34 34"><path d="M18 1A16 16 0 1 1 10 31L1 34L3 26A16 16 0 0 1 18 1z" fill="#7470cf" /><rect x="8" y="10" width="13" height="14" rx="2" fill="#fff" /><path d="M22 15L27 11V23L22 19z" fill="#fff" /></svg></Pin>
            <Pin $run>
              <svg width="32" height="34" viewBox="0 0 32 34">
                <path d="M1 3H20L26 9V31L1 33z" fill="#f4f6f0" />
                <path d="M2 23Q10 19 26 20V31L3 32z" fill="#6cc024" />
                <path d="M5 26L12 22L21 27M6 30L22 24" stroke="#2e8a1c" strokeWidth="2" fill="none" />
                <path d="M4 17Q12 12 20 17T24 20M9 12Q14 8 17 14M8 20H20" stroke="#486b3a" strokeWidth="2" fill="none" />
                <path d="M3 4H20" stroke="#8c8c8c" strokeWidth="2" strokeDasharray="2 2" />
                <path d="M31 3L24 20" stroke="#c3913c" strokeWidth="2.500" />
              </svg>
            </Pin>
            <Pin>
              <svg width="34" height="34" viewBox="0 0 34 34">
                <circle cx="17" cy="17" r="17" fill="#f8c015" />
                <path d="M17 17L2.300 8.500A17 17 0 0 1 31.700 8.500z" fill="#dd4032" />
                <path d="M2.300 8.500A17 17 0 0 0 17 34L24.400 21.200L17 17z" fill="#2d8f46" />
                <path d="M17 8.500H31.700A17 17 0 0 1 17 34L24.400 21.200z" fill="#f8c015" />
                <circle cx="17" cy="17" r="8.500" fill="#f4f4f4" /><circle cx="17" cy="17" r="6.500" fill="#2a73e0" />
              </svg>
            </Pin>
            <Pin>
              <svg width="36" height="35" viewBox="0 0 36 35">
                <path d="M1 10L6 7V28L1 25z" fill="#7d48b8" />
                <path d="M1 25L6 28L27 8V1L22 4z" fill="#6a38a0" />
                <path d="M1 10L6 7L27 26V35L22 32z" fill="#a56fdc" />
                <path d="M26 0L35 4.500V30.500L26 35z" fill="#c08bf0" />
              </svg>
            </Pin>
            <Pin>
              <svg width="34" height="34" viewBox="0 0 34 34">
                <path d="M4 4V20Q4 23 12.500 23T21 20V4z" fill="#efc047" /><ellipse cx="12.500" cy="4.500" rx="8.500" ry="3.300" fill="#f7b98a" />
                <path d="M24 3H32V10M2 25V32H9" stroke="#458f5a" strokeWidth="3" fill="none" />
                <path d="M13 18Q18 17 20 22L29 31M29 18L17 31M27 16V20H31" stroke="#1e6aa6" strokeWidth="3" fill="none" />
              </svg>
            </Pin>
            <Pin $run>
              <svg width="34" height="34" viewBox="0 0 34 34"><circle cx="17" cy="17" r="17" fill="#0f5cff" /><text x="5" y="20" fontSize="10" fontWeight="600" fill="#fff" textLength="25" lengthAdjust="spacingAndGlyphs">zoom</text></svg>
            </Pin>
            <Pin $run>
              <svg width="32" height="34" viewBox="0 0 32 34"><path d="M0 6Q0 4 2 4H9L12 7H22V14H0z" fill="#e3a91c" /><path d="M0 10H10L13 7H30Q32 7 32 9V26Q32 28 30 28H2Q0 28 0 26z" fill="#fbd467" /></svg>
            </Pin>
            <Pin $run>
              <svg width="34" height="34" viewBox="0 0 34 34"><rect y="4" width="34" height="25" rx="2" fill="#434345" /><path d="M0 9V6Q0 4 2 4H32Q34 4 34 6V9z" fill="#8d8d8f" /><path d="M0 9V6Q0 4 2 4H11V9z" fill="#d4d4d5" /><path d="M5 13L11 18.500L5 24" stroke="#d8d8d9" strokeWidth="3.500" fill="none" /><rect x="16" y="22" width="11" height="4" fill="#eee" /></svg>
            </Pin>
            <Pin $run><VsCode /></Pin>
            <Pin $run><VsCode /></Pin>
            <Pin $active><PaintMark s={34} /></Pin>
          </Pins>
          <Tray>
            <Ic w={16} h={9} sw={2}><path d="M1 8L8 1L15 8" /></Ic>
            <TrayIcon $left={26}>
              <svg width="23" height="16" viewBox="0 0 23 16"><path d="M3 11Q2 4 8 4Q11 0 15 2.500Q19 3 18 8L10 12z" fill="#9b9b9d" /><path d="M4 16Q0 15 0 12T4 8.500Q7 6 11 9Q14 6 18 8Q23 8.500 23 12T19 16z" fill="#f0f0f0" /></svg>
            </TrayIcon>
            <TrayIcon $left={26}>
              <Ic w={17} h={23} sw={1.900}><path d="M8.500 1Q12 1 12 4.500V11.500Q12 15 8.500 15T5 11.500V4.500Q5 1 8.500 1zM1 10.500Q1 18.500 8.500 18.500T16 10.500M8.500 18.500V22.500" stroke="#8fc7d0" /></Ic>
            </TrayIcon>
            <TrayText $w={38} $left={27} $align="center" $ls={-0.6}>ENG<br />IN</TrayText>
            <TrayIcon $left={23}>
              <Ic w={23} h={17} sw={1.800}><path d="M1 6Q11.500 -4 22 6M4 9.500Q11.500 2.500 19 9.500M7.500 12.500Q11.500 9 15.500 12.500" /><circle cx="11.500" cy="15" r="1.300" fill="currentColor" /></Ic>
            </TrayIcon>
            <TrayIcon $left={11}>
              <Ic w={24} h={20} sw={1.800}><path d="M1 7H5L10.500 2V18L5 13H1zM14 7Q16 10 14 13M17 4Q21.500 10 17 16M20 1.500Q26 10 20 18.500" /></Ic>
            </TrayIcon>
            <TrayIcon $left={11}>
              <Ic w={23} h={20} sw={1.800}><path d="M8 4H17Q19.500 4 19.500 6V14.500Q19.500 17 17 17H4Q1.500 17 1.500 14.500V10M20 8H22.500V12.500H20" /><path d="M6 0L1 8H5L3 13L9 6H5.500z" fill="currentColor" strokeWidth="1" /><path d="M5 15L11 7V15z" fill="currentColor" /></Ic>
            </TrayIcon>
            <TrayText $w={100} $left={12} $align="right" $ls={0.05}>09:17<br />05-05-2023</TrayText>
            <Count>3</Count>
          </Tray>
        </TaskBar>
      </Stage>
      <Recording><Dot /><RecordingText>Recording</RecordingText></Recording>
    </Screen>
  );
}
